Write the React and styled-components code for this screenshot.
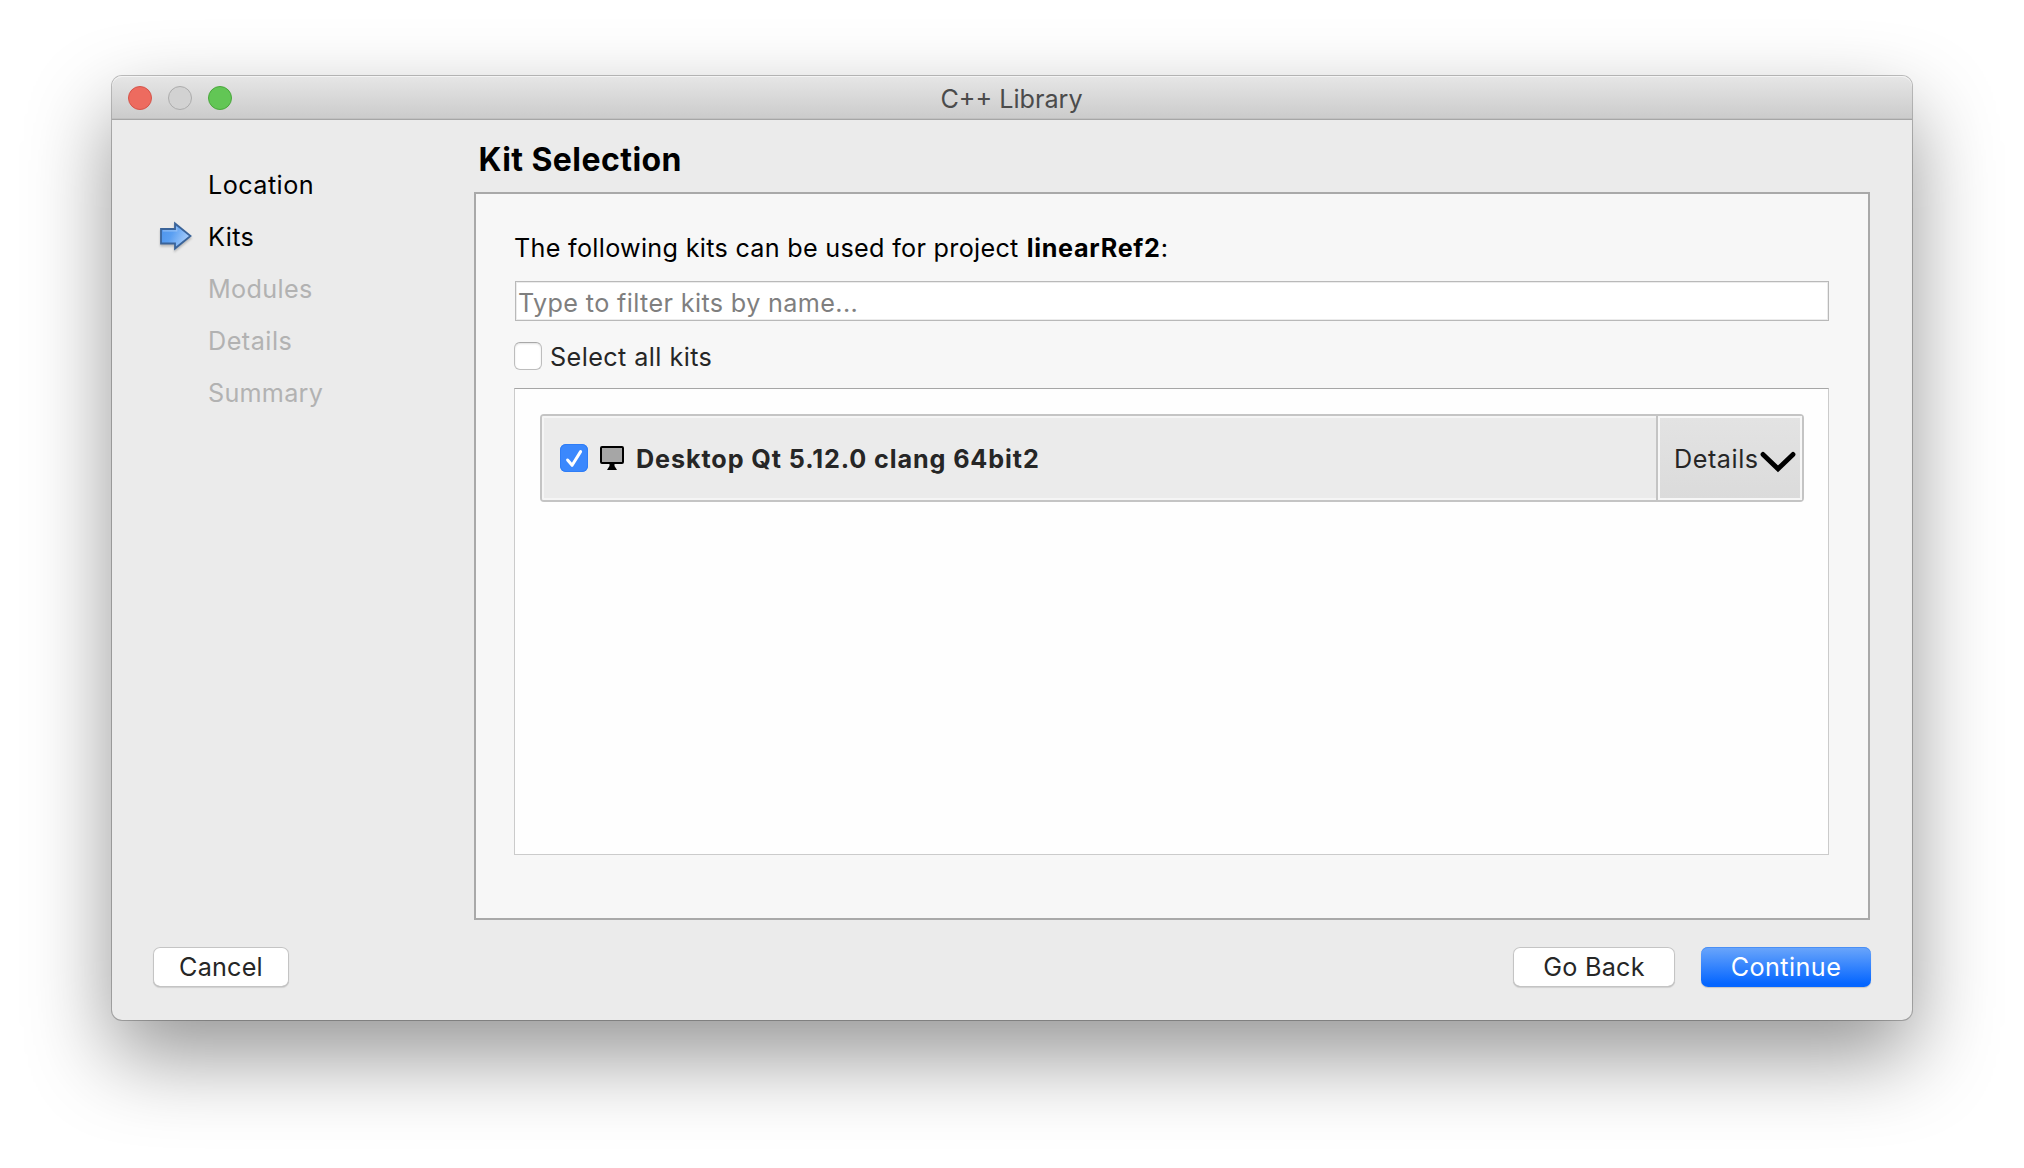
import React from 'react';
import styled, { createGlobalStyle, css } from 'styled-components';

const Global = createGlobalStyle`
  *, *::before, *::after { box-sizing: border-box; }
  html, body { margin: 0; background: #fff; overflow: hidden; }
  body { font-family: Inter, "Liberation Sans", sans-serif; font-size: 25.2px; color: #262626; }
`;

const Desktop = styled.div`
  height: 1168px;
  padding: 76px 112px;
  background: #fff;
`;

const Window = styled.div`
  display: flex;
  flex-direction: column;
  width: 1800px;
  height: 944px;
  border-radius: 10px;
  background: #ebebeb;
  box-shadow: 0 0 0 1px rgba(0, 0, 0, 0.24), 0 36px 84px rgba(0, 0, 0, 0.42);
`;

const TitleBar = styled.header`
  display: grid;
  grid-template-columns: 1fr auto 1fr;
  height: 44px;
  padding: 0 17px 0 16px;
  border-bottom: 1px solid #a6a6a6;
  border-radius: 10px 10px 0 0;
  background: linear-gradient(#e6e6e6, #cbcbcb);
  box-shadow: inset 0 1px 0 #f4f4f4, inset 0 -1px 0 #c0c0c0;
`;

const Lights = styled.div`
  display: flex;
  align-items: center;
  gap: 16px;
  height: 44px;
`;

const Light = styled.span`
  width: 24px;
  height: 24px;
  border-radius: 50%;
  border: 1px solid ${p => p.$edge};
  background: ${p => p.$fill};
`;

const Text = styled.span`
  white-space: pre;
  letter-spacing: ${p => p.$track || 0}px;
`;

const WindowTitle = styled(Text)`
  line-height: 46px;
  height: 43px;
  color: #4b4b4b;
`;

const Body = styled.div`
  display: flex;
  height: 800px;
`;

const Sidebar = styled.nav`
  display: flex;
  flex-direction: column;
  width: 362px;
  padding: 39px 0 0 48px;
`;

const Step = styled.div`
  display: grid;
  grid-template-columns: 48px auto;
  height: 52px;
  line-height: 52px;
  color: ${p => (p.$pending ? '#b2b2b2' : '#000')};
`;

const StepMark = styled.span`
  display: flex;
  padding-top: 10px;
`;

const Main = styled.main`
  display: flex;
  flex-direction: column;
  width: 1396px;
`;

const Heading = styled.h1`
  margin: 0;
  height: 72px;
  padding: 8px 0 0 4.5px;
  line-height: 64px;
  font-size: 32px;
  font-weight: 700;
  color: #000;
`;

const Panel = styled.section`
  display: flex;
  flex-direction: column;
  height: 728px;
  padding: 34px 39px 0 38px;
  border: 2px solid #a9a9a9;
  background: #f7f7f7;
`;

const Intro = styled.p`
  display: flex;
  margin: 0;
  height: 40px;
  line-height: 40px;
  color: #000;
  gap: 8px;
`;

const Filter = styled.div`
  height: 40px;
  margin: 13px 0 0 1px;
  padding: 2px 0 0 2px;
  line-height: 38px;
  border: 1px solid #b9b9b9;
  background: #fff;
  box-shadow: inset 0 1px 0 #ececec, inset 0 -1px 0 #ececec, inset -1px 0 0 #ececec, inset 1px 0 0 #ececec;
  color: #7f7f7f;
`;

const SelectAll = styled.label`
  display: flex;
  align-items: center;
  gap: 8px;
  height: 28px;
  margin-top: 21px;
  line-height: 28px;
`;

const Nudged = styled(Text)`
  padding-top: 2px;
  font-weight: ${p => (p.$bold ? 700 : 400)};
`;

const Box = styled.span`
  display: flex;
  flex: none;
  width: 28px;
  height: 28px;
  border-radius: 6px;
  ${p => p.$on ? css`
    background: #3b88fd;
    box-shadow: inset 0 0 0 1px #2f7df6;
  ` : css`
    background: #fff;
    border: 1px solid #bdbdbd;
    border-top-color: #a8a8a8;
    box-shadow: inset 0 1px 2px rgba(0, 0, 0, 0.12);
  `}
`;

const KitList = styled.div`
  height: 467px;
  margin-top: 18px;
  padding: 25px 24px 25px 25px;
  border: 1px solid #cbcbcb;
  border-top-color: #a6a6a6;
  background: #fefefe;
`;

const Kit = styled.div`
  display: flex;
  width: 1264px;
  height: 88px;
  border: 2px solid #c4c4c4;
  border-radius: 4px;
`;

const KitName = styled.div`
  display: flex;
  align-items: center;
  flex: 1;
  padding-left: 16px;
  border: 2px solid #f5f5f5;
  border-right: 0;
  border-radius: 2px 0 0 2px;
  background: #ebebeb;
`;

const KitIcon = styled.span`
  display: flex;
  margin: 0 12px 0 12px;
`;

const DetailsButton = styled.div`
  display: flex;
  align-items: center;
  width: 144px;
  padding-left: 14px;
  border: 2px solid #f7f7f7;
  background: linear-gradient(#e3e3e3, #dbdbdb);
  box-shadow: -2px 0 0 #c4c4c4;
`;

const Chevron = styled.svg`
  flex: none;
  margin: 8px 0 0 1px;
`;

const Footer = styled.footer`
  display: flex;
  align-items: center;
  height: 100px;
  padding: 0 41px;
  margin-top: -3px;
`;

const Button = styled.div`
  display: flex;
  justify-content: center;
  width: ${p => p.$width}px;
  height: 40px;
  margin-left: ${p => p.$gap || 0};
  line-height: 40px;
  border-radius: 7px;
  ${p => p.$primary ? css`
    color: #fff;
    background: linear-gradient(#6ba6fb, #0566ff 92%);
    box-shadow: inset 0 1px 0 #4a8ff5, 0 1px 1px rgba(0, 0, 0, 0.16);
  ` : css`
    color: #262626;
    background: #fff;
    box-shadow: inset 0 0 0 1px #c4c4c4, inset 0 -1px 0 #a8a8a8, 0 1px 1px rgba(0, 0, 0, 0.12);
  `}
`;

const Arrow = styled.svg`
  filter: drop-shadow(0 2px 1px rgba(0, 0, 0, 0.22));
`;

const ArrowIcon = () => (
  <Arrow width="33" height="31" viewBox="0 0 33 31">
    <defs>
      <linearGradient id="arrow" x1="0" y1="0.3" x2="1" y2="0.7">
        <stop offset="0" stopColor="#4f95ec" />
        <stop offset="0.35" stopColor="#5a9ff2" />
        <stop offset="1" stopColor="#b4d4fb" />
      </linearGradient>
    </defs>
    <path d="M1 8H15V2.5L30.5 15L15 27.5V22.5H1Z" fill="url(#arrow)" stroke="#3a6399" strokeWidth="1.8" />
    <path d="M2.8 9.8H16.8V6" fill="none" stroke="#a5cbf8" strokeWidth="1.2" opacity=".7" />
  </Arrow>
);

const TickIcon = () => (
  <svg width="28" height="28" viewBox="0 0 28 28">
    <path d="M7.6 16L12.1 21.3L20.6 7.6" fill="none" stroke="#fff" strokeWidth="3" strokeLinecap="round" strokeLinejoin="round" />
  </svg>
);

const MonitorIcon = () => (
  <svg width="24" height="24" viewBox="0 0 24 24">
    <rect x="1" y="1" width="22" height="16" rx="1" fill="#a6a6a6" stroke="#000" strokeWidth="2" />
    <path d="M9.5 18H14.5V20L17 24H7L9.5 20Z" fill="#000" />
  </svg>
);

const ChevronIcon = () => (
  <Chevron width="36" height="24" viewBox="0 0 36 24">
    <path d="M3 4.4L18 18.8L33 4.4" fill="none" stroke="#000" strokeWidth="4.8" strokeLinecap="round" strokeLinejoin="miter" />
  </Chevron>
);

const steps = [
  { label: 'Location', track: 0.45 },
  { label: 'Kits', track: 0.36, current: true },
  { label: 'Modules', track: 0.36 , pending: true },
  { label: 'Details', track: 0.5, pending: true },
  { label: 'Summary', track: 0.25, pending: true },
];

export default function App() {
  return (
    <Desktop>
      <Global />
      <Window>
        <TitleBar>
          <Lights>
            <Light $fill="#ed6b5f" $edge="#d5544a" />
            <Light $fill="#d2d2d2" $edge="#acacac" />
            <Light $fill="#62c655" $edge="#4aa73c" />
          </Lights>
          <WindowTitle>C++ Library</WindowTitle>
        </TitleBar>
        <Body>
          <Sidebar>
            {steps.map(s => (
              <Step key={s.label} $pending={s.pending}>
                <StepMark>{s.current && <ArrowIcon />}</StepMark>
                <Text $track={s.track}>{s.label}</Text>
              </Step>
            ))}
          </Sidebar>
          <Main>
            <Heading><Text $track={0.44}>Kit Selection</Text></Heading>
            <Panel>
              <Intro>
                <Text $track={0.29}>The following kits can be used for project</Text>
                <span>
                  <Text as="b" $track={0.7}>linearRef2</Text>:
                </span>
              </Intro>
              <Filter><Text $track={0.36}>Type to filter kits by name...</Text></Filter>
              <SelectAll>
                <Box />
                <Nudged $track={0.42}>Select all kits</Nudged>
              </SelectAll>
              <KitList>
                <Kit>
                  <KitName>
                    <Box $on><TickIcon /></Box>
                    <KitIcon><MonitorIcon /></KitIcon>
                    <Nudged $bold $track={0.89}>Desktop Qt 5.12.0 clang 64bit2</Nudged>
                  </KitName>
                  <DetailsButton>
                    <Nudged $track={0.55}>Details</Nudged>
                    <ChevronIcon />
                  </DetailsButton>
                </Kit>
              </KitList>
            </Panel>
          </Main>
        </Body>
        <Footer>
          <Button $width={136}><Text $track={0.2}>Cancel</Text></Button>
          <Button $width={162} $gap="auto"><Text $track={0.25}>Go Back</Text></Button>
          <Button $width={170} $gap="26px" $primary><Text $track={0.43}>Continue</Text></Button>
        </Footer>
      </Window>
    </Desktop>
  );
}
